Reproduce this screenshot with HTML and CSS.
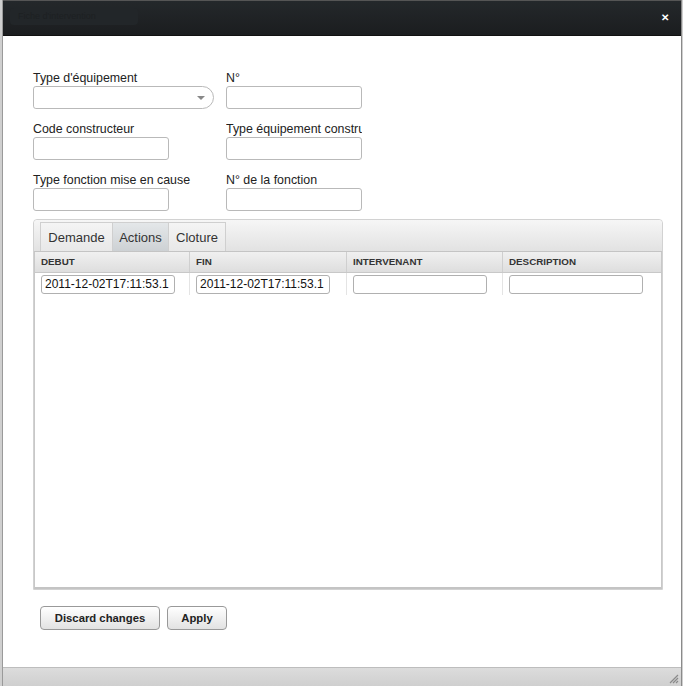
FILE: index.html
```
<!DOCTYPE html>
<html>
<head>
<meta charset="utf-8">
<link rel="stylesheet" href="styles.css">
</head>
<body>
<div class="window">
  <div class="header">
    <div class="title">Fiche d'intervention</div>
    <div class="close">&#x2715;</div>
  </div>
  <div class="main">
    <div class="form">
      <div class="field col1">
        <label>Type d'équipement</label>
        <div class="combo"><span class="arrow"></span></div>
      </div>
      <div class="field">
        <label>N°</label>
        <div class="input"></div>
      </div>
      <div class="field col1">
        <label>Code constructeur</label>
        <div class="input"></div>
      </div>
      <div class="field">
        <label class="clip">Type équipement constructeur</label>
        <div class="input"></div>
      </div>
      <div class="field col1">
        <label>Type fonction mise en cause</label>
        <div class="input"></div>
      </div>
      <div class="field">
        <label>N° de la fonction</label>
        <div class="input"></div>
      </div>
    </div>
    <div class="panel">
      <div class="tabs">
        <div class="tab">Demande</div>
        <div class="tab active">Actions</div>
        <div class="tab">Cloture</div>
      </div>
      <div class="grid">
        <div class="head">
          <div class="hcell">DEBUT</div>
          <div class="hcell">FIN</div>
          <div class="hcell">INTERVENANT</div>
          <div class="hcell last">DESCRIPTION</div>
        </div>
        <div class="row">
          <div class="cell"><div class="cinput">2011-12-02T17:11:53.1</div></div>
          <div class="cell"><div class="cinput">2011-12-02T17:11:53.1</div></div>
          <div class="cell"><div class="cinput"></div></div>
          <div class="cell last"><div class="cinput"></div></div>
        </div>
      </div>
    </div>
    <div class="buttons">
      <div class="btn discard">Discard changes</div>
      <div class="btn apply">Apply</div>
    </div>
  </div>
  <div class="footer">
    <svg class="grip" width="10" height="10" viewBox="0 0 10 10">
      <path d="M1 9 L9 1 M4 9 L9 4 M7 9 L9 7" stroke="#8a8a8a" stroke-width="1.2" fill="none"/>
    </svg>
  </div>
</div>
</body>
</html>
```
FILE: styles.css
```
* { box-sizing: border-box; }
html, body { margin: 0; padding: 0; }
body {
  background: #cfcfcf;
  font-family: "Liberation Sans", Arial, sans-serif;
  width: 683px;
  height: 686px;
  overflow: hidden;
}
.window {
  margin-left: 2px;
  width: 680px;
  height: 686px;
  display: flex;
  flex-direction: column;
  background: #fff;
  border-left: 1px solid #9a9a9a;
  border-right: 1px solid #8a8a8a;
}
.header {
  height: 36px;
  flex: none;
  background: linear-gradient(#24282b, #1b1d1f);
  border-top: 1px solid #555;
  border-bottom: 1px solid #111;
  display: flex;
  align-items: center;
  justify-content: space-between;
  padding: 0 12px 0 7px;
}
.title {
  height: 17px;
  width: 128px;
  margin-top: -3px;
  border-radius: 4px;
  background: #222629;
  color: #1d2022;
  font-size: 9px;
  line-height: 17px;
  padding-left: 8px;
  overflow: hidden;
  white-space: nowrap;
}
.close {
  color: #fff;
  font-size: 10px;
  font-weight: bold;
  line-height: 10px;
}
.main {
  flex: 1;
  padding: 35px 0 0 30px;
}
.form {
  display: grid;
  grid-template-columns: 193px 140px;
  row-gap: 13px;
}
.field label {
  display: block;
  font-size: 12.4px;
  line-height: 14px;
  height: 14px;
  color: #222;
  margin-bottom: 1px;
  white-space: nowrap;
}
.field label.clip {
  width: 136px;
  overflow: hidden;
}
.input {
  width: 136px;
  height: 23px;
  border: 1px solid #b9b9b9;
  border-radius: 3px;
  background: #fff;
}
.combo {
  position: relative;
  width: 181px;
  height: 23px;
  border: 1px solid #b9b9b9;
  border-radius: 3px 12px 12px 3px;
  background: #fff;
}
.arrow {
  position: absolute;
  left: 163px;
  top: 9px;
  width: 0;
  height: 0;
  border-left: 4px solid transparent;
  border-right: 4px solid transparent;
  border-top: 4px solid #888;
}
.panel {
  margin-top: 8px;
  width: 630px;
  border: 1px solid #d2d2d2;
  border-radius: 4px 4px 0 0;
}
.tabs {
  height: 32px;
  display: flex;
  align-items: flex-end;
  padding-left: 6px;
  background: linear-gradient(#f6f6f6, #e2e2e2);
  border-radius: 4px 4px 0 0;
  border-bottom: 1px solid #c4c4c4;
}
.tab {
  height: 29px;
  padding: 0;
  font-size: 13px;
  line-height: 29px;
  color: #333;
  border: 1px solid #cfcfcf;
  border-bottom: none;
  border-right: none;
  background: linear-gradient(#f4f4f4, #e8e8e8);
  white-space: nowrap;
}
.tab:first-child { width: 72px; text-align: center; }
.tab:nth-child(2) { width: 56px; text-align: center; }
.tab:nth-child(3) { width: 58px; text-align: center; border-right: 1px solid #cfcfcf; }
.tab.active {
  background: linear-gradient(#e4e7e9, #cdd1d4);
}
.grid {
  height: 337px;
  border-left: 1px solid #c8c8c8;
  border-right: 1px solid #c8c8c8;
  border-bottom: 2px solid #c4c4c4;
}
.head, .row {
  display: grid;
  grid-template-columns: 155px 157px 156px 1fr;
}
.head {
  height: 21px;
  background: linear-gradient(#f0f0f0, #dedede);
  border-bottom: 1px solid #c8c8c8;
}
.hcell {
  font-size: 9.8px;
  font-weight: bold;
  color: #333;
  line-height: 20px;
  padding-left: 6px;
  border-right: 1px solid #cfcfcf;
}
.hcell.last { border-right: none; }
.row { height: 22px; }
.cell {
  padding: 2px 0 0 6px;
  border-right: 1px solid #e4e4e4;
}
.cell.last { border-right: none; }
.cinput {
  width: 134px;
  height: 19px;
  border: 1px solid #b0b0b0;
  border-radius: 3px;
  font-size: 12px;
  line-height: 17px;
  padding-left: 3px;
  color: #111;
  white-space: nowrap;
  overflow: hidden;
}
.buttons {
  display: flex;
  gap: 7px;
  margin-top: 16px;
  padding-left: 7px;
}
.btn {
  height: 24px;
  border: 1px solid #999;
  border-radius: 4px;
  background: linear-gradient(#ffffff, #e2e2e2);
  font-size: 11.3px;
  font-weight: bold;
  color: #222;
  line-height: 22px;
  text-align: center;
}
.discard { width: 120px; }
.apply { width: 60px; }
.footer {
  flex: none;
  height: 19px;
  background: linear-gradient(#dcdcdc, #cfcfcf);
  border-top: 1px solid #bdbdbd;
  display: flex;
  justify-content: flex-end;
  align-items: flex-end;
  padding: 0 2px 2px 0;
}
.grip { display: block; }
```
